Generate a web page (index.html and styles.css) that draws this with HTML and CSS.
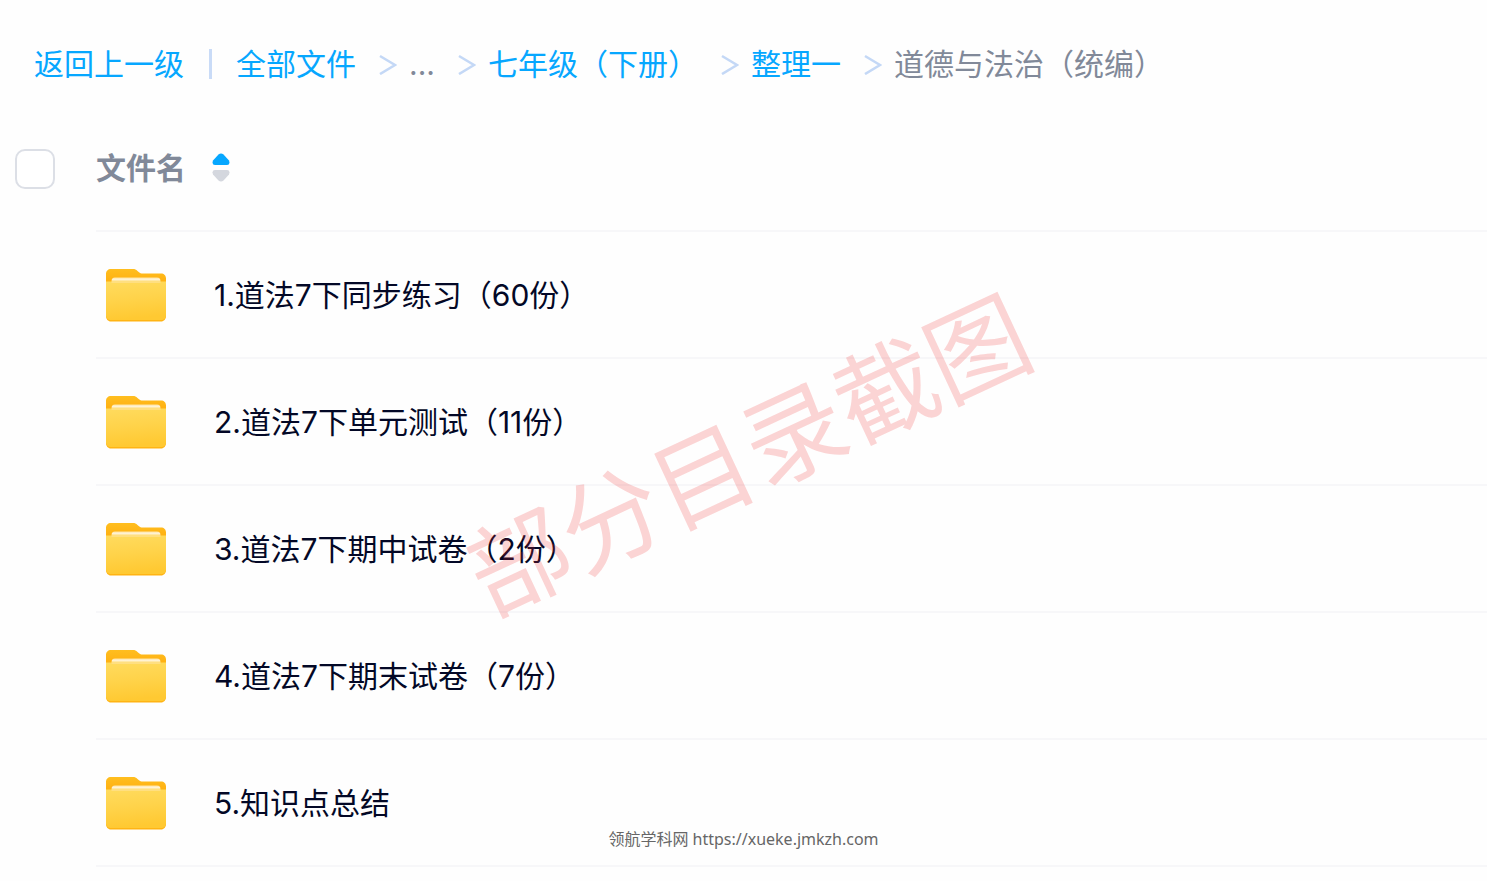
FILE: index.html
```
<!DOCTYPE html>
<html lang="zh-CN">
<head>
  <meta charset="UTF-8" />
  <title>道德与法治（统编）</title>
  <meta name="viewport" content="width=device-width, initial-scale=1.0" />
  <link rel="stylesheet" href="styles.css">
</head>
<body>
  <!-- shared icons -->
  <svg class="sprite" aria-hidden="true">
    <defs>
      <linearGradient id="folderBack" x1="0" y1="0" x2="0" y2="1">
        <stop offset="0" stop-color="#ffbe1f" />
        <stop offset="0.25" stop-color="#ffb011" />
        <stop offset="1" stop-color="#ffb414" />
      </linearGradient>
      <linearGradient id="folderFront" x1="0" y1="0" x2="0.15" y2="1">
        <stop offset="0" stop-color="#ffdb5e" />
        <stop offset="0.5" stop-color="#ffd34a" />
        <stop offset="1" stop-color="#ffc932" />
      </linearGradient>
      <linearGradient id="folderPaper" x1="0" y1="0" x2="0" y2="1">
        <stop offset="0" stop-color="#ffe3a0" />
        <stop offset="0.35" stop-color="#fff3d6" />
        <stop offset="0.7" stop-color="#ffdf80" />
      </linearGradient>
    </defs>
    <symbol id="folder" viewBox="0 0 60 54">
      <path fill="url(#folderBack)" d="M5 1h22c2 0 3 .6 4.500 2l1.500 1.300c1 .8 2 1.200 3.500 1.200H55c3 0 5 2 5 5V48c0 3-2 5.500-5 5.500H5c-3 0-5-2.500-5-5.500V6c0-3 2-5 5-5z" />
      <path fill="url(#folderFront)" d="M0 13.500h60V47c0 3-2 5-5 5H5c-3 0-5-2-5-5z" />
      <path fill="url(#folderPaper)" d="M9 9.500h42c2.500 0 3.500 1.500 3.500 4v1.500h-49v-1.500c0-2.500 1-4 3.500-4z" />
    </symbol>
    <symbol id="chevron" viewBox="0 0 18 22">
      <path fill="none" stroke="#c4d8f6" stroke-width="2.600" d="M1 3l15 9-15 9" />
    </symbol>
  </svg>

  <nav class="breadcrumb" aria-label="路径">
    <a href="#">返回上一级</a>
    <span class="divider"></span>
    <a href="#">全部文件</a>
    <svg class="chevron"><use href="#chevron" /></svg>
    <span class="more">...</span>
    <svg class="chevron"><use href="#chevron" /></svg>
    <a href="#">七年级（下册）</a>
    <svg class="chevron"><use href="#chevron" /></svg>
    <a href="#">整理一</a>
    <svg class="chevron"><use href="#chevron" /></svg>
    <span>道德与法治（统编）</span>
  </nav>

  <main>
    <table class="files">
      <thead>
        <tr>
          <th class="check"><input type="checkbox" aria-label="全选" /></th>
          <th class="name">
            <button type="button" class="sort">
              文件名
              <svg width="18" height="30" viewBox="0 0 18 30" aria-hidden="true">
                <path fill="#06a7ff" d="M6.500 1.600Q9-.6 11.500 1.600L17 7.500Q18.500 12 15 12H3Q-.5 12 1 7.500z" />
                <path fill="#d4d7de" d="M6.500 27.400Q9 29.600 11.500 27.400L17 21.500Q18.500 17 15 17H3Q-.5 17 1 21.500z" />
              </svg>
            </button>
          </th>
        </tr>
      </thead>
      <tbody>
        <tr>
          <td class="check"></td>
          <td class="name"><div class="file"><svg class="folder"><use href="#folder" /></svg><a href="#">1.道法7下同步练习（60份）</a></div></td>
        </tr>
        <tr>
          <td class="check"></td>
          <td class="name"><div class="file"><svg class="folder"><use href="#folder" /></svg><a href="#">2.道法7下单元测试（11份）</a></div></td>
        </tr>
        <tr>
          <td class="check"></td>
          <td class="name"><div class="file"><svg class="folder"><use href="#folder" /></svg><a href="#">3.道法7下期中试卷（2份）</a></div></td>
        </tr>
        <tr>
          <td class="check"></td>
          <td class="name"><div class="file"><svg class="folder"><use href="#folder" /></svg><a href="#">4.道法7下期末试卷（7份）</a></div></td>
        </tr>
        <tr>
          <td class="check"></td>
          <td class="name"><div class="file"><svg class="folder"><use href="#folder" /></svg><a href="#">5.知识点总结</a></div></td>
        </tr>
      </tbody>
    </table>
    <div class="watermark">部分目录截图</div>
    <p class="site">领航学科网 https://xueke.jmkzh.com</p>
  </main>
</body>
</html>
```
FILE: styles.css
```
:root {
  --link-color: #06a7ff;
  --text-color: #030826;
  --muted-color: #818999;
  --line-color: #f7f7f9;
}

* {
  box-sizing: border-box;
}

body {
  margin: 0;
  font-family: Inter, "Noto Sans CJK SC", sans-serif;
  font-size: 30px;
  line-height: 44px;
  background-color: #fefefe;
  color: var(--text-color);
}

a {
  color: inherit;
  text-decoration: none;
}

.sprite {
  position: absolute;
  width: 0;
  height: 0;
}

.breadcrumb {
  display: flex;
  align-items: center;
  padding: 42px 34px 20px;
  color: var(--muted-color);
  white-space: nowrap;
}

.breadcrumb a {
  color: var(--link-color);
}

.divider {
  width: 3px;
  height: 30px;
  margin: 0 24px 0 25px;
  background-color: #c9dbf7;
}

.chevron {
  flex: none;
  width: 18px;
  height: 22px;
  margin: 0 12px 0 23px;
}

main {
  position: relative;
}

.files {
  width: 100%;
  border-collapse: separate;
  border-spacing: 0;
}

th, td {
  padding: 0;
  text-align: left;
}

.check {
  width: 96px;
  padding-left: 15px;
}

.name {
  border-bottom: 2px solid var(--line-color);
}

thead th {
  height: 126px;
}

.check input {
  display: block;
  appearance: none;
  width: 40px;
  height: 40px;
  margin: 0;
  border: 2px solid #dcdfe6;
  border-radius: 10px;
  background-color: #fff;
}

.check input:checked {
  background-color: var(--link-color);
}

.sort {
  display: flex;
  align-items: center;
  gap: 26px;
  padding: 0;
  border: none;
  background: none;
  font: inherit;
  font-weight: bold;
  color: var(--muted-color);
  cursor: pointer;
}

.file {
  display: flex;
  align-items: center;
  gap: 48px;
  height: 125px;
  padding-left: 10px;
}

.file a:hover {
  color: var(--link-color);
}

.folder {
  flex: none;
  width: 60px;
  height: 54px;
}

.watermark {
  position: absolute;
  top: 46%;
  left: calc(50% + 5px);
  font-size: 101px;
  line-height: 1;
  white-space: nowrap;
  color: rgba(240, 45, 45, 0.2);
  transform: translate(-50%, -50%) rotate(-25deg);
  pointer-events: none;
}

.site {
  position: absolute;
  right: 0;
  bottom: 16px;
  left: 0;
  margin: 0;
  font-family: "Noto Sans", "Noto Sans CJK SC", sans-serif;
  font-size: 16px;
  line-height: 24px;
  text-align: center;
  color: #666;
}
```
